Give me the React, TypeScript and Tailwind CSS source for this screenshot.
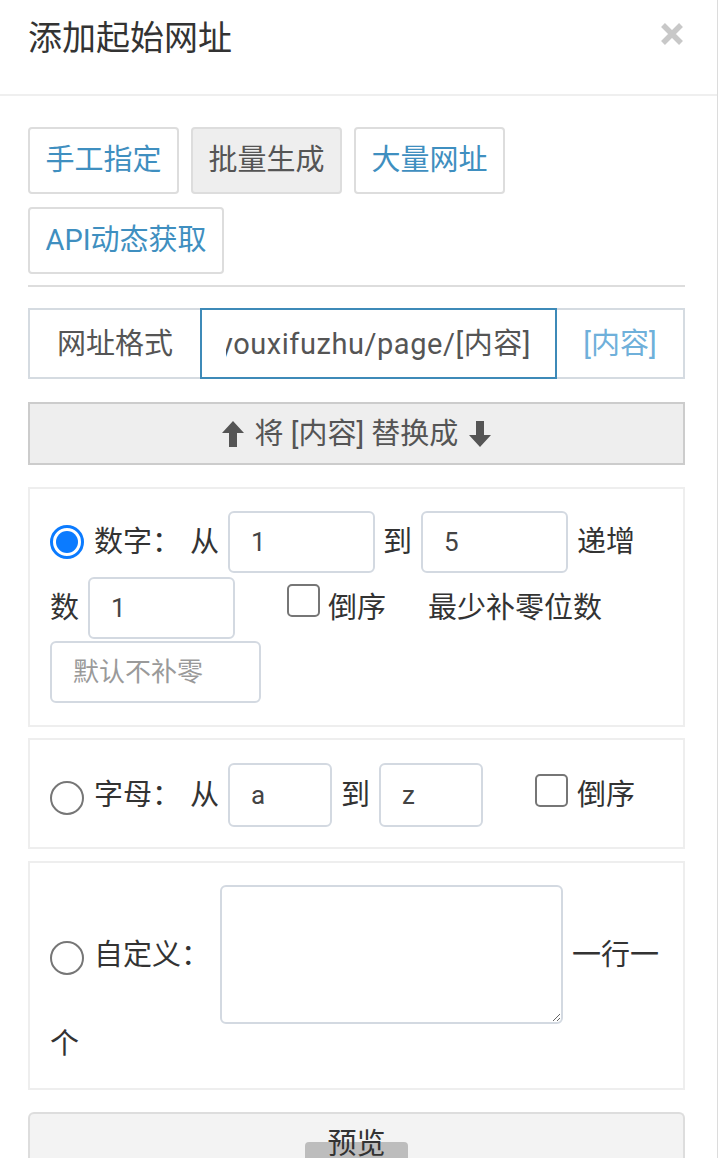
import React from "react";

function Radio({ checked }: { checked?: boolean }) {
  if (checked)
    return (
      <span className="flex h-[34px] w-[34px] shrink-0 items-center justify-center rounded-full border-[3px] border-[#0b7bff] bg-white">
        <span className="h-[22px] w-[22px] rounded-full bg-[#0b7bff]" />
      </span>
    );
  return <span className="block h-[34px] w-[34px] shrink-0 rounded-full border-2 border-[#767676] bg-white" />;
}

function Check({ className = "" }: { className?: string }) {
  return <span className={"block h-[33px] w-[33px] shrink-0 rounded-[5px] border-2 border-[#767676] bg-white " + className} />;
}

function Field({ className = "", value, placeholder }: { className?: string; value?: string; placeholder?: string }) {
  return (
    <input
      readOnly
      defaultValue={value}
      placeholder={placeholder}
      className={
        "h-full shrink-0 rounded-[6px] border-2 border-[#d3d9e1] bg-white px-[21px] text-[26px] text-[#444] outline-none placeholder:text-[#9a9a9a] " +
        className
      }
    />
  );
}

function ArrowUp() {
  return (
    <svg width="24" height="28" viewBox="0 0 24 28" className="shrink-0">
      <path d="M12 1 L23 13 L16 13 L16 27 L8 27 L8 13 L1 13 Z" fill="#555" />
    </svg>
  );
}

function ArrowDown() {
  return (
    <svg width="24" height="28" viewBox="0 0 24 28" className="shrink-0">
      <path d="M12 27 L23 15 L16 15 L16 1 L8 1 L8 15 L1 15 Z" fill="#555" />
    </svg>
  );
}

const tabs = [
  { label: "手工指定", active: false },
  { label: "批量生成", active: true },
  { label: "大量网址", active: false },
  { label: "API动态获取", active: false },
];

const txt = "shrink-0 whitespace-nowrap";

export default function App() {
  return (
    <div className="w-[718px] min-h-[1158px] border-r border-[#dcdcdc] bg-white font-['Roboto','Noto_Sans_CJK_SC',sans-serif] text-[29px] leading-[40px] text-[#333]">
      {/* header */}
      <div className="flex h-[96px] items-start justify-between border-b-2 border-[#efefef] pl-[28px] pr-[33px] pt-[16px]">
        <h3 className="text-[34px] leading-[44px] text-[#333]">添加起始网址</h3>
        <svg width="24" height="24" viewBox="0 0 24 24" className="mt-[6px]">
          <path d="M3 3 L21 21 M21 3 L3 21" stroke="#c8c8c8" strokeWidth="5.5" />
        </svg>
      </div>

      <div className="pl-[28px] pr-[32px] pt-[31px]">
        {/* tabs */}
        <div className="flex flex-wrap gap-x-[12px] gap-y-[13px]">
          {tabs.map((t) => (
            <button
              key={t.label}
              className={
                "rounded-[4px] border-2 border-[#ddd] px-[15.5px] py-[12px] text-[29px] leading-[39px] " +
                (t.active ? "bg-[#eee] text-[#555]" : "bg-white text-[#3f8fc0]")
              }
            >
              {t.label}
            </button>
          ))}
        </div>
        <div className="mt-[11px] h-[2px] bg-[#ddd]" />

        {/* url format */}
        <div className="mt-[21px] flex h-[71px] border-2 border-[#d5dbe1]">
          <div className="flex w-[170px] items-center justify-center text-[#555]">网址格式</div>
          <div className="-my-[2px] flex w-[357px] items-center border-2 border-[#3d8ab8] px-[24px] text-[#555]">
            <div className="flex w-full justify-end overflow-hidden whitespace-nowrap">
              <span className="tracking-[0.55px]">http://www.a.com/youxifuzhu/page/[内容]</span>
            </div>
          </div>
          <div className="flex flex-1 items-center justify-center text-[#6fb0da]">[内容]</div>
        </div>

        {/* replace */}
        <button className="mt-[23px] flex h-[63px] w-full items-center justify-center gap-[10px] border-2 border-[#ccc] bg-[#eee] text-[#555]">
          <ArrowUp />
          <span>将 [内容] 替换成</span>
          <ArrowDown />
        </button>

        {/* numbers */}
        <div className="mt-[22px] border-2 border-[#eee] px-[20px] py-[22px]">
          <div className="flex h-[62px] items-center">
            <Radio checked />
            <span className={"ml-[10px] " + txt}>数字：</span>
            <span className={"ml-[9px] " + txt}>从</span>
            <Field className="ml-[9px] w-[147px]" value="1" />
            <span className={"ml-[8px] " + txt}>到</span>
            <Field className="ml-[9px] w-[147px]" value="5" />
            <span className={"ml-[9px] " + txt}>递增</span>
          </div>
          <div className="mt-[4px] flex h-[62px] items-center">
            <span className={txt}>数</span>
            <Field className="ml-[9px] w-[147px]" value="1" />
            <Check className="ml-[52px] -mt-[16px]" />
            <span className={"ml-[8px] " + txt}>倒序</span>
            <span className={"ml-[42px] " + txt}>最少补零位数</span>
          </div>
          <div className="mt-[2px] flex h-[62px]">
            <Field className="w-[211px]" placeholder="默认不补零" />
          </div>
        </div>

        {/* letters */}
        <div className="mt-[11px] border-2 border-[#eee] px-[20px] pb-[20px] pt-[23px]">
          <div className="flex h-[64px] items-center">
            <span className="mt-[6px] flex">
              <Radio />
            </span>
            <span className={"ml-[10px] " + txt}>字母：</span>
            <span className={"ml-[9px] " + txt}>从</span>
            <Field className="ml-[9px] w-[104px]" value="a" />
            <span className={"ml-[9px] " + txt}>到</span>
            <Field className="ml-[9px] w-[104px]" value="z" />
            <Check className="ml-[52px] -mt-[10px]" />
            <span className={"ml-[9px] " + txt}>倒序</span>
          </div>
        </div>

        {/* custom */}
        <div className="mt-[12px] border-2 border-[#eee] px-[20px] pb-[24px] pt-[22px]">
          <div className="flex h-[139px] items-center">
            <span className="mt-[6px] flex">
              <Radio />
            </span>
            <span className={"ml-[10px] " + txt}>自定义：</span>
            <textarea
              readOnly
              className="ml-[10px] h-[139px] w-[343px] shrink-0 rounded-[6px] border-2 border-[#d3d9e1] bg-white outline-none"
            />
            <span className={"ml-[9px] " + txt}>一行一</span>
          </div>
          <div>个</div>
        </div>

        {/* preview */}
        <div className="relative mt-[22px] h-[60px] rounded-t-[6px] border-2 border-b-0 border-[#ddd] bg-[#f3f3f3]">
          <span className="absolute left-[275px] top-[28px] h-[40px] w-[103px] rounded-[4px] bg-[#bdbdbd]" />
          <div className="relative pt-[10px] text-center text-[#333]">预览</div>
        </div>
      </div>
    </div>
  );
}
